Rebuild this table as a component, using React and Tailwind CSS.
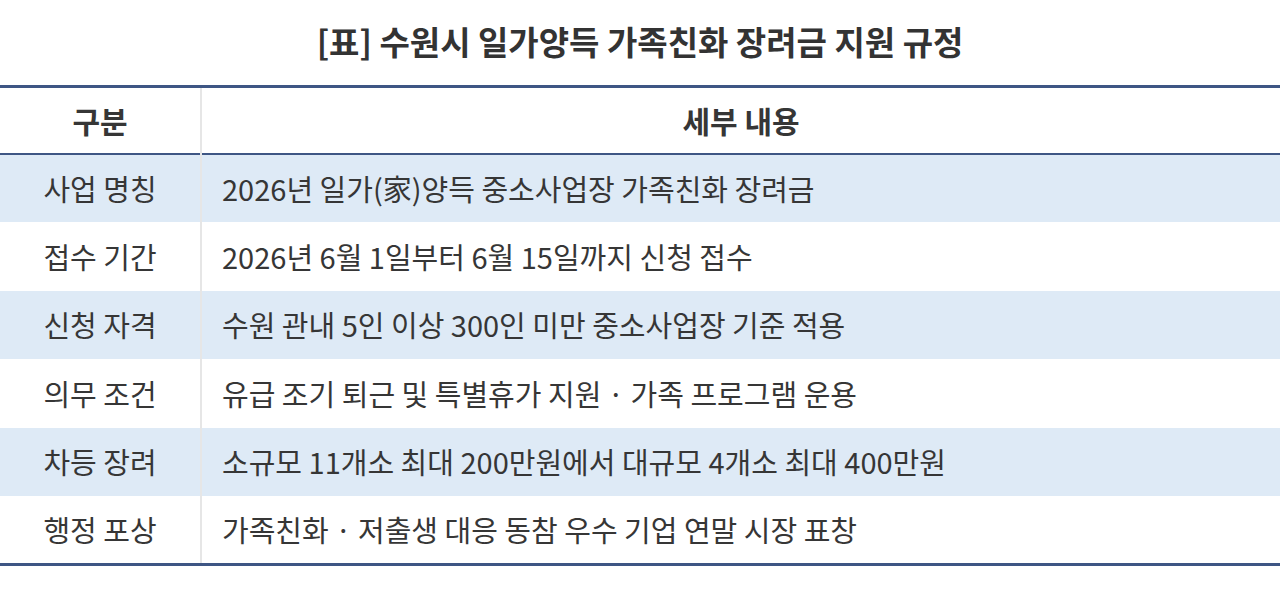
import React from 'react';

const rows = [
  ['사업 명칭', '2026년 일가(家)양득 중소사업장 가족친화 장려금'],
  ['접수 기간', '2026년 6월 1일부터 6월 15일까지 신청 접수'],
  ['신청 자격', '수원 관내 5인 이상 300인 미만 중소사업장 기준 적용'],
  ['의무 조건', '유급 조기 퇴근 및 특별휴가 지원 · 가족 프로그램 운용'],
  ['차등 장려', '소규모 11개소 최대 200만원에서 대규모 4개소 최대 400만원'],
  ['행정 포상', '가족친화 · 저출생 대응 동참 우수 기업 연말 시장 표창'],
];

export default function App() {
  return (
    <div className="w-[1280px] h-[614px] bg-white text-[#363636] font-['Noto_Sans_CJK_KR','Noto_Sans',sans-serif]">
      <h1 className="h-[85px] pt-[18px] text-center text-[33px] font-bold leading-[46px] text-[#333]">
        [표] 수원시 일가양득 가족친화 장려금 지원 규정
      </h1>
      <table className="w-full border-collapse border-t-[3px] border-b-[3px] border-[#3e5684] text-[29px]">
        <thead>
          <tr className="h-[67px] border-b-[2px] border-[#3e5684] text-[30px]">
            <th className="w-[201px] border-r-2 border-[#e6e6e6] font-bold text-center">구분</th>
            <th className="font-bold text-center">세부 내용</th>
          </tr>
        </thead>
        <tbody>
          {rows.map(([label, desc], i) => (
            <tr key={label} className={`h-[68.5px] ${i % 2 === 0 ? 'bg-[#deeaf6]' : 'bg-white'}`}>
              <td className="border-r-2 border-[#e6e6e6] text-center">{label}</td>
              <td className="pl-[20px]">{desc}</td>
            </tr>
          ))}
        </tbody>
      </table>
    </div>
  );
}
